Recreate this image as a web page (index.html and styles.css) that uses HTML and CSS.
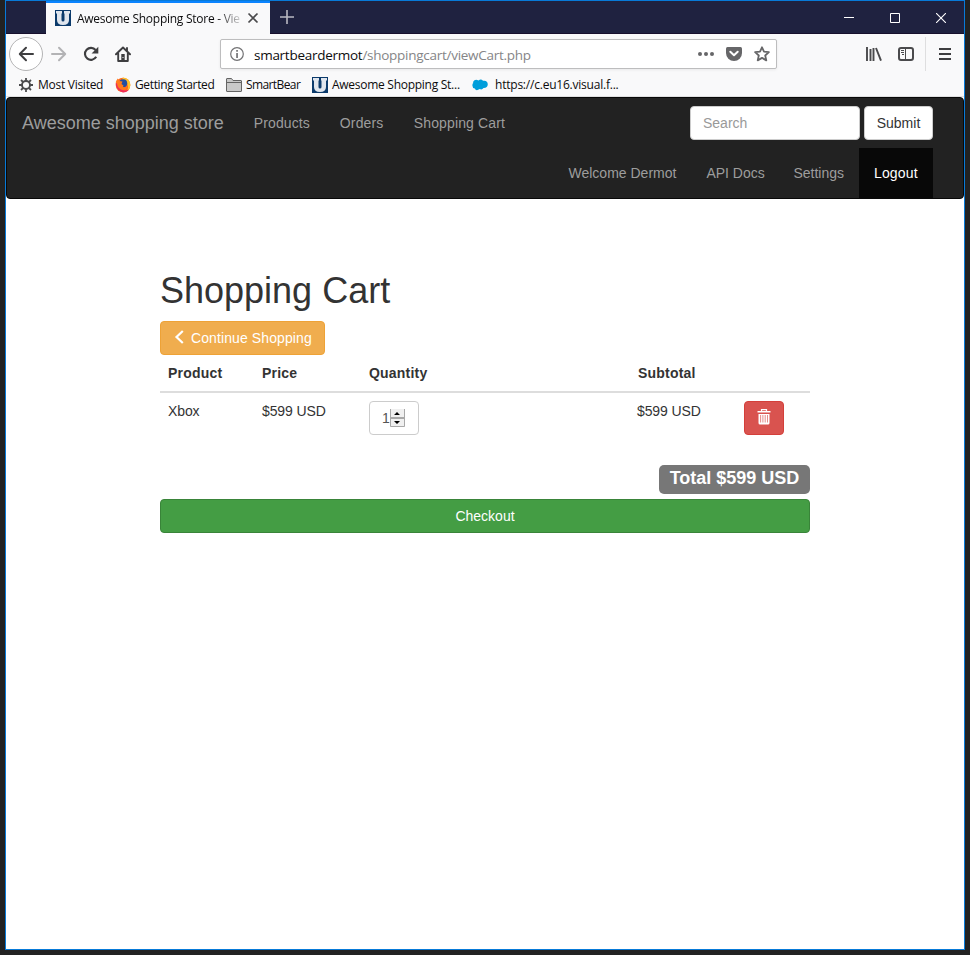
FILE: index.html
```html
<!DOCTYPE html>
<html lang="en">
<head>
<meta charset="utf-8">
<title>Awesome Shopping Store - View Cart</title>
<link rel="stylesheet" href="styles.css">
</head>
<body>
<div class="window">
  <header class="titlebar">
    <div class="tab">
      <svg class="u-logo" width="16" height="16" viewBox="0 0 16 16"><rect width="16" height="16" fill="#0b3a6b"/><path d="M1 1h6v2.500H6.500V10q0 1.500 1.500 1.500T9.500 10V3.500H9V1h6v2.500h-1V10q0 5-6 5t-6-5V3.500H1z" fill="#dfe5ed"/></svg>
      <span class="tab-title">Awesome Shopping Store - Vie</span>
      <svg class="tab-close" width="12" height="12" viewBox="0 0 12 12"><path d="M1.500 1.500l9 9m0-9l-9 9" stroke="#4a4a4c" stroke-width="1.700"/></svg>
    </div>
    <svg class="tab-new" width="14" height="14" viewBox="0 0 14 14"><path d="M7 0v14M0 7h14" stroke="#b9b9c2" stroke-width="1.600"/></svg>
    <div class="controls">
      <svg width="10" height="10" viewBox="0 0 10 10"><path d="M0 4.500h10" stroke="#fff"/></svg>
      <svg width="10" height="10" viewBox="0 0 10 10"><path d="M.5.5h9v9h-9z" stroke="#fff" fill="none"/></svg>
      <svg width="10" height="10" viewBox="0 0 10 10"><path d="M0 0l10 10M10 0L0 10" stroke="#fff" stroke-width="1.100"/></svg>
    </div>
  </header>

  <div class="toolbar">
    <span class="back"><svg width="16" height="16" viewBox="0 0 16 16"><path d="M15 8H2M8 1.800L1.800 8 8 14.200" fill="none" stroke="#3e3e40" stroke-width="2" stroke-linecap="round" stroke-linejoin="round"/></svg></span>
    <svg class="forward" width="16" height="16" viewBox="0 0 16 16"><path d="M1 8h13M8 1.800L14.200 8 8 14.200" fill="none" stroke="#b3b3b5" stroke-width="2" stroke-linecap="round" stroke-linejoin="round"/></svg>
    <svg class="reload" width="16" height="16" viewBox="0 0 16 16"><path d="M13.200 10.800A6 6 0 1 1 12.600 4" fill="none" stroke="#3e3e40" stroke-width="2.100"/><path d="M15.300.8v6.700H8.600z" fill="#3e3e40"/></svg>
    <svg class="home" width="16" height="16" viewBox="0 0 16 16"><path d="M1 8.300L8 1.500l7 6.800M3.200 7.500V15h9.600V7.500M12 5V2" fill="none" stroke="#3e3e40" stroke-width="1.900" stroke-linecap="round" stroke-linejoin="round"/><path d="M6.300 8h3.400v7H6.300z" fill="#3e3e40"/><path d="M7.500 11h1v1h-1z" fill="#fff"/></svg>
    <div class="urlbar">
      <svg width="14" height="14" viewBox="0 0 14 14"><circle cx="7" cy="7" r="6.300" fill="none" stroke="#737375" stroke-width="1.200"/><path d="M6.200 3h1.700v1.700H6.200zM6.200 6h1.700v5H6.200z" fill="#737375"/></svg>
      <span class="url">smartbeardermot<span class="path">/shoppingcart/viewCart.php</span></span>
      <svg class="dots" width="16" height="4" viewBox="0 0 16 4"><g fill="#666668"><circle cx="2" cy="2" r="2"/><circle cx="8" cy="2" r="2"/><circle cx="14" cy="2" r="2"/></g></svg>
      <svg class="pocket" width="16" height="14" viewBox="0 0 16 14"><path d="M1.500 0h13Q16 0 16 1.500V6a8 8 0 0 1-16 0V1.500Q0 0 1.500 0z" fill="#666668"/><path d="M4.300 4.800L8 8.300l3.700-3.500" fill="none" stroke="#fff" stroke-width="2" stroke-linecap="round" stroke-linejoin="round"/></svg>
      <svg class="star" width="16" height="16" viewBox="0 0 16 16"><path d="M8 1.300l2 4.400 4.900.5-3.700 3.300 1.100 4.900L8 11.900l-4.300 2.500 1.100-4.900L1.100 6.200 6 5.700z" fill="none" stroke="#666668" stroke-width="1.800" stroke-linejoin="round"/></svg>
    </div>
    <svg class="library" width="16" height="14" viewBox="0 0 16 14"><path d="M1 0v14M4.500 2v12M7.500 1v13M10 1l5 12.700" stroke="#4a4a4c" stroke-width="1.900"/></svg>
    <svg class="sidebar" width="16" height="14" viewBox="0 0 16 14"><rect x="1" y="1" width="14" height="12" rx="2" fill="none" stroke="#4a4a4c" stroke-width="2"/><path d="M7.500 1v12M3 3.500h3M3 5.500h3M4 7.500h2" stroke="#4a4a4c"/></svg>
    <span class="divider"></span>
    <svg class="menu" width="12" height="12" viewBox="0 0 12 12"><path d="M0 1h12M0 6h12M0 11h12" stroke="#3e3e40" stroke-width="1.900"/></svg>
  </div>

  <nav class="bookmarks">
    <a class="mark visited"><svg width="14" height="14" viewBox="0 0 14 14"><circle cx="7" cy="7" r="4" fill="none" stroke="#4a4a4c" stroke-width="1.900"/><path d="M7 0v3M7 11v3M0 7h3M11 7h3M2 2l2.200 2.200M9.800 9.800L12 12M12 2L9.800 4.200M4.200 9.800L2 12" stroke="#4a4a4c" stroke-width="1.800"/></svg><span>Most Visited</span></a>
    <a class="mark started"><svg width="16" height="16" viewBox="0 0 16 16"><circle cx="8" cy="8" r="7.300" fill="#ff6a1f"/><path d="M8 .5q7 .5 7.400 7.500-.2 4-3 6 1.500-4 0-7Q11 4 7 3z" fill="#ffc22b"/><circle cx="8.200" cy="6.300" r="4" fill="#234ea0"/><path d="M.8 5q.5-2 2-3.500L4.300 4l3.200.5L6.500 7l2 1.500Q7 10.500 10.500 10.500L12 9q0 4-4.500 4.200Q1 13 .8 5z" fill="#ff7a1c"/><path d="M.7 6q0 7 7.300 9.400 4 0 6-3-4 2-8 0-3.500-1.500-4-6z" fill="#ee2b5c"/></svg><span>Getting Started</span></a>
    <a class="mark folder"><svg width="16" height="14" viewBox="0 0 16 14"><path d="M.5 13V1q0-.5.5-.5h4.500L7 2.500h8q.5 0 .5.500v10q0 .5-.5.500H1q-.5 0-.5-.5z" fill="#c9c9c9" stroke="#646464"/><path d="M1 4.500h14" stroke="#646464"/></svg><span>SmartBear</span></a>
    <a class="mark store"><svg width="16" height="16" viewBox="0 0 16 16"><rect width="16" height="16" fill="#0b3a6b"/><path d="M1 1h6v2.500H6.500V10q0 1.500 1.500 1.500T9.500 10V3.500H9V1h6v2.500h-1V10q0 5-6 5t-6-5V3.500H1z" fill="#dfe5ed"/></svg><span>Awesome Shopping St...</span></a>
    <a class="mark cloud"><svg width="16" height="12" viewBox="0 0 16 12"><path d="M1 3Q3-.5 6.500 1.500 9-.5 11 1.800q4.500-.8 4.800 3.400-.3 4-4.300 3.800-1.500 2.200-3.800 1Q4 12.500 2.800 9.500.2 9 .4 6q0-1.500.9-2z" fill="#009edb"/></svg><span>https://c.eu16.visual.f...</span></a>
  </nav>

  <nav class="navbar">
    <div class="nav-main">
      <a class="brand">Awesome shopping store</a>
      <a class="nav-link products">Products</a><a class="nav-link orders">Orders</a><a class="nav-link shop">Shopping Cart</a>
      <form class="search"><input class="control" type="text" placeholder="Search"><button class="btn default" type="button">Submit</button></form>
    </div>
    <div class="nav-user"><a class="nav-link">Welcome Dermot</a><a class="nav-link docs">API Docs</a><a class="nav-link">Settings</a><a class="nav-link active">Logout</a></div>
  </nav>

  <main class="cart">
    <h1>Shopping Cart</h1>
    <a class="btn warning"><svg width="14" height="14" viewBox="0 0 14 14"><path d="M9.800 1L3.500 7l6.300 6" fill="none" stroke="#fff" stroke-width="2.200"/></svg> Continue Shopping</a>
    <table>
      <colgroup><col class="c1"><col class="c2"><col class="c3"><col class="c4"><col class="c5"></colgroup>
      <thead><tr><th>Product</th><th>Price</th><th>Quantity</th><th>Subtotal</th><th></th></tr></thead>
      <tbody><tr>
        <td>Xbox</td><td>$599 USD</td>
        <td><div class="quantity"><span>1</span><svg width="15" height="18" viewBox="0 0 15 18"><path d="M0 0h15v18H0z" fill="#f0f0f0"/><path d="M.5 0v17.500h14V0M.5 8.500h14M.5 9.500h14" fill="none" stroke="#a8a8a8"/><path d="M4 6h6L7 3zM4 12h6l-3 3z" fill="#000"/></svg></div></td>
        <td class="subtotal">$599 USD</td>
        <td><button class="btn danger" type="button"><svg width="14" height="16" viewBox="0 0 14 16"><path d="M4.500 2.500V.700h5v1.800" fill="none" stroke="#fff" stroke-width="1.200"/><path d="M.500 2h13v1.500H.500z" fill="#fff"/><path d="M1.500 5h11v9q0 1.500-1.500 1.500H3q-1.500 0-1.500-1.500z" fill="#fff"/><path d="M3.600 6v7.500M5.900 6v7.500M8.200 6v7.500M10.500 6v7.500" stroke="#e58d8a"/></svg></button></td>
      </tr></tbody>
    </table>
    <div class="total-row"><span class="total">Total $599 USD</span></div>
    <button class="btn success" type="button">Checkout</button>
  </main>
</div>
</body>
</html>
```
FILE: styles.css
```css
* { box-sizing: border-box; }
html, body { margin: 0; height: 955px; }
body { background: #222; padding: 0 5px 5px; overflow: hidden; font: 14px/20px "Liberation Sans", Arial, sans-serif; color: #333; }
svg { display: block; flex: none; }
.window { width: 960px; height: 950px; border: 1px solid #087ad8; background: #fff; }

.titlebar { height: 33px; display: flex; align-items: center; background: #1f2240; border-bottom: 1px solid #17102d; padding-left: 40px; }
.tab { width: 224px; height: 33px; margin-bottom: -1px; background: #f9f9fa; border-top: 2px solid #0a84ff; display: flex; align-items: center; padding: 0 0 1px 9px; font: 12px/18px "Open Sans", "Noto Sans", sans-serif; color: #0c0c0d; }
.tab-title { width: 165px; margin: 2px 0 0 6px; white-space: nowrap; letter-spacing: -.26px; -webkit-mask-image: linear-gradient(to right, #000 140px, transparent 168px); mask-image: linear-gradient(to right, #000 140px, transparent 168px); }
.tab-close { margin-left: 5px; }
.tab-new { margin-left: 10px; }
.controls { margin: 2px 18px 0 auto; display: flex; gap: 36px; }

.toolbar { height: 40px; background: #f9f9fa; display: flex; align-items: center; padding-left: 3px; }
.back { width: 34px; height: 34px; border: 1px solid #b4b4b5; border-radius: 50%; background: #fff; display: flex; align-items: center; justify-content: center; }
.forward { margin-left: 8px; }
.reload { margin-left: 16px; }
.home { margin-left: 16px; }
.urlbar { width: 557px; height: 30px; margin-left: 89px; background: #fff; border: 1px solid #bdbdbe; border-radius: 2px; box-shadow: 0 1px 3px #0001; display: flex; align-items: center; padding-left: 9px; }
.url { width: 444px; margin: 2px 0 0 10px; font: 13.5px/20px "Open Sans", "Noto Sans", sans-serif; letter-spacing: -.27px; color: #0c0c0d; white-space: nowrap; }
.url .path { color: #858587; }
.pocket, .star { margin-left: 12px; }
.library { margin-left: 89px; }
.sidebar { margin-left: 16px; }
.divider { width: 1px; height: 34px; margin-left: 11px; background: #dededf; }
.menu { margin-left: 13px; }

.bookmarks { height: 23px; background: #f9f9fa; border-bottom: 1px solid #e0e0e1; display: flex; align-items: center; padding-left: 13px; font: 12px/18px "Open Sans", "Noto Sans", sans-serif; color: #0c0c0d; letter-spacing: -.27px; white-space: nowrap; }
.mark { display: flex; align-items: center; gap: 4px; }
.mark.visited { width: 96px; gap: 5px; }
.mark.started { width: 111px; letter-spacing: -.36px; }
.mark.folder { width: 86px; letter-spacing: -.6px; }
.mark.store { width: 160px; }
.mark.cloud { gap: 7px; letter-spacing: -.22px; }

.navbar { height: 102px; background: #222; border: 1px solid #080808; border-radius: 4px; color: #9d9d9d; }
.nav-main { display: flex; height: 50px; padding-right: 30px; }
.brand { padding: 15px; font-size: 18px; }
.nav-link { padding: 15px; white-space: nowrap; }
.products { width: 86px; letter-spacing: .1px; }
.orders { width: 74px; letter-spacing: .15px; }
.shop { letter-spacing: .13px; }
.search { margin: 8px 0 0 auto; display: flex; gap: 4px; }
.control { width: 170px; height: 34px; border: 1px solid #ccc; border-radius: 4px; padding: 6px 12px; font: inherit; color: #555; }
.control::placeholder { color: #999; }
.nav-user { height: 50px; display: flex; justify-content: flex-end; padding-right: 30px; }
.docs { width: 87px; padding-right: 0; }
.nav-link.active { width: 74px; letter-spacing: .15px; background: #080808; color: #fff; }

.btn { height: 34px; border: 1px solid transparent; border-radius: 4px; padding: 6px 12px; font: 14px/20px "Liberation Sans", Arial, sans-serif; color: #fff; }
.default { width: 69px; padding: 6px 0; background: #fff; border-color: #ccc; color: #333; }
.warning { display: inline-flex; gap: 4px; width: 165px; background: #f0ad4e; border-color: #eea236; white-space: nowrap; vertical-align: top; letter-spacing: .1px; }
.warning svg { margin-top: 2px; }
.danger { display: block; width: 40px; background: #d9534f; border-color: #d43f3a; }
.danger svg { margin-top: -3px; }
.success { display: block; width: 100%; background: #449d44; border-color: #398439; }

.cart { width: 650px; margin: 72px 0 0 154px; }
h1 { margin: 0 0 10px; font-size: 36px; font-weight: 500; line-height: 40px; }
table { width: 650px; table-layout: fixed; border-collapse: separate; border-spacing: 0; }
.c1 { width: 94px; }
.c2 { width: 107px; }
.c3 { width: 269px; }
.c4 { width: 106px; }
.c5 { width: 74px; }
th, td { padding: 8px; text-align: left; vertical-align: top; }
th { height: 38px; border-bottom: 2px solid #ddd; letter-spacing: .2px; }
td { letter-spacing: -.1px; }
td.subtotal { padding-left: 7px; }
.quantity { width: 50px; height: 34px; border: 1px solid #ccc; border-radius: 4px; padding: 6px 12px; display: flex; align-items: center; color: #555; }
.quantity span { width: 8px; }
.total-row { display: flex; justify-content: flex-end; margin: 22px 0 5px; }
.total { width: 151px; height: 29px; border-radius: 5px; background: #777; color: #fff; font-size: 18px; font-weight: bold; line-height: 26px; text-align: center; }
```
